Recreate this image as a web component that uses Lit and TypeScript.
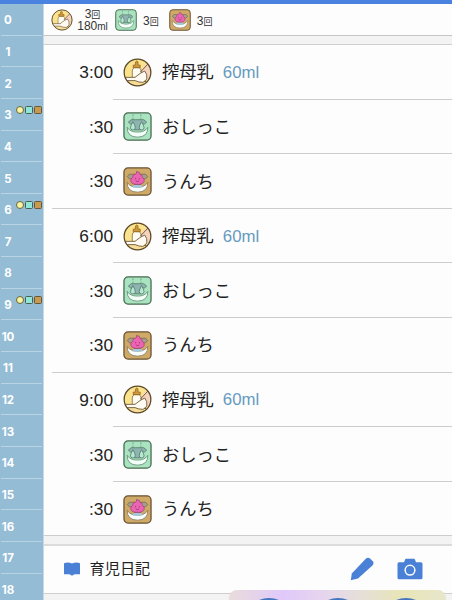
import { LitElement, html, svg, css } from "lit";
import { customElement, property } from "lit/decorators.js";

type Kind = "milk" | "pee" | "poo";

const milk = svg`
  <defs><clipPath id="c"><circle cx="15" cy="15" r="13.6"/></clipPath></defs>
  <circle cx="15" cy="15" r="13.6" fill="#fae38c"/>
  <g clip-path="url(#c)" stroke-linejoin="round">
    <path d="M26 4L18 13L24 20L27 28L31 28V5Z" fill="#f6d3bd"/>
    <path d="M1 24H12L20 27L15 30L3 28Z" fill="#f8dc9a"/>
    <path d="M9.6 20V13.5Q9.6 11 11.8 10H16.6Q18.8 11 18.8 13.5V17" fill="#fffdf3" stroke="#8a7448" stroke-width=".9"/>
    <path d="M10.6 10V7.4H12.7Q13 5.8 12.8 4.3Q14.2 1.8 15.6 4.3Q15.4 5.8 15.7 7.4H17.8V10Z" fill="#d2963a" stroke="#8a6125" stroke-width=".8"/>
    <path d="M1 20H12.5Q15.5 17.5 18.5 15.5L22.5 13.5Q25.5 17 24.6 21.5Q23.5 24.5 20.5 25.2Q16 25.2 12.5 23.4H1" fill="#fffaf2" stroke="#665238" stroke-width=".9"/>
    <path d="M18 14.5L27 5M22.5 23.5L26 27" fill="none" stroke="#654d2c" stroke-width=".9"/>
  </g>
  <circle cx="15" cy="15" r="13.8" fill="none" stroke="#5b4826" stroke-width="1.3"/>`;

const pee = svg`
  <rect x="1" y="1" width="28" height="28" rx="4.2" fill="#aae3bf" stroke="#44694f" stroke-width="1.3"/>
  <path d="M8.5 8H21.5L24.5 10.5L22 12.5L19.5 12L18.5 18.5H11.5L10.5 12L8 12.5L5.5 10.5Z" fill="#8fb3b0" stroke="#517266" stroke-width=".8" stroke-linejoin="round"/>
  <path d="M4.3 15.8Q4.3 26 15 26Q25.7 26 25.7 15.8Q23 20.8 15 20.8Q7 20.8 4.3 15.8Z" fill="#f2fff7" stroke="#5d8570" stroke-width=".8"/>
  <path d="M10.3 10Q5.2 18.3 10.3 18.6Q15.2 18.3 10.3 10ZM19.2 10Q14.4 18.3 19.2 18.6Q24.4 18.3 19.2 10Z" fill="#b7e8d2" stroke="#4d7863" stroke-width=".8"/>
  <path d="M10.3 2.5V4.5M10.3 5.8V8M18.5 2.5V4.5M18.5 5.8V8" stroke="#6a927c" stroke-width=".8"/>`;

const poo = svg`
  <rect x="1" y="1" width="28" height="28" rx="4.2" fill="#cfa968" stroke="#68502e" stroke-width="1.3"/>
  <path d="M6.5 7.5H23.5L25.5 10L23 12.5L20 12L18.5 18H11.5L10 12L7 12.5L4.5 10Z" fill="#a79d8f" stroke="#75654f" stroke-width=".8" stroke-linejoin="round"/>
  <path d="M4.3 15.8Q4.3 26 15 26Q25.7 26 25.7 15.8Q23 20.8 15 20.8Q7 20.8 4.3 15.8Z" fill="#f8fcfa" stroke="#84745b" stroke-width=".8"/>
  <path d="M11 18.5H19L20.5 21Q15 22.5 9.5 21Z" fill="#a9c6d6"/>
  <path d="M14 4.6Q17.8 5 17.6 7.6Q20.6 8.4 19.8 10.6Q22.6 11.8 21.9 15Q20.8 18 15 18Q9.2 18 8.1 15Q7.4 11.8 10.2 10.6Q9.4 8.4 12.4 7.6Q14.8 7 14 4.6Z" fill="#ec65b2" stroke="#9c3c75" stroke-width=".7"/>
  <path d="M13 11.3V12.7M17 11.3V12.7M13.2 14.3Q15 16 16.8 14.3" fill="none" stroke="#8f3168" stroke-width=".8"/>`;

const art = { milk, pee, poo };

@customElement("care-icon")
class CareIcon extends LitElement {
  @property() kind: Kind = "milk";
  static styles = css`
    :host { display: block; flex: none; }
    svg { display: block; width: 100%; height: 100%; }
  `;
  render() {
    return html`<svg viewBox="0 0 30 30">${art[this.kind]}</svg>`;
  }
}

@customElement("app-root")
class AppRoot extends LitElement {
  static styles = css`
    :host {
      display: flex; flex-direction: column; position: relative;
      height: 600px; width: 452px; overflow: hidden; background: #fdfdfd; color: #222;
      font-family: "Liberation Sans", "Noto Sans CJK JP", sans-serif;
    }
    * { box-sizing: border-box; }
    .bar { height: 4px; flex: none; background: #4a83df; }
    .body { display: flex; height: 596px; }
    .hours { width: 44px; flex: none; background: #94bcd5; border-right: 1px solid #c6d9e4; overflow: hidden; }
    .hour {
      height: 31.65px; margin: 0 1px; border-bottom: 1px solid #b9d5e5; display: flex; align-items: center;
      color: #fff; font: bold 11.5px Inter, sans-serif;
    }
    .num { width: 14px; display: flex; justify-content: center; white-space: nowrap; padding-top: 2px; }
    .marks { display: flex; gap: 1px; margin: -8px 0 0 1px; }
    .mark { width: 8px; height: 8px; border: 1px solid #49604f; border-radius: 1.5px; }
    .mark.milk { background: #faf3a0; border-radius: 50%; border-color: #66663f; }
    .mark.pee { background: #91e6da; }
    .mark.poo { background: #c69a50; border-color: #665738; }
    .main { flex: 1; min-width: 0; display: flex; flex-direction: column; }
    .summary { height: 32px; flex: none; display: flex; align-items: center; padding: 0 0 0 7px; border-bottom: 1px solid #c6c6c6; }
    .summary care-icon { width: 22px; height: 22px; }
    .count { display: flex; align-items: baseline; justify-content: center; font-size: 12px; line-height: 12px; color: #333; }
    .count small { font-size: 9px; line-height: 9px; }
    .count .ml { font-size: 10px; }
    .first { width: 31px; margin: 2px 7px 0 4px; }
    .mid { margin: 2px 10px 0 6px; }
    .last { margin: 2px 0 0 6px; }
    .gap { flex: none; height: 9px; background: #f3f3f3; border-bottom: 1px solid #cfcfcf; }
    .gap.low { height: 9.5px; border-bottom: 2px solid #dcdcdc; }
    .row { height: 54.62px; flex: none; display: flex; padding-left: 8px; }
    .time { width: 61px; text-align: right; font-size: 17.3px; display: flex; align-items: center; justify-content: flex-end; padding-top: 1px; }
    .entry { flex: 1; display: flex; align-items: center; padding: 1px 0 0 10px; border-bottom: 1px solid #cdcdcf; }
    .row.end .time { border-bottom: 1px solid #cdcdcf; }
    .row.final { padding-left: 0; }
    .row.final .time { width: 69px; }
    .entry care-icon { width: 29px; height: 29px; margin-right: 10px; }
    .label { font-size: 17.3px; line-height: 24px; white-space: nowrap; }
    .amount { font-size: 16.8px; color: #669abe; margin: 1px 0 0 9px; }
    .diary { height: 48px; flex: none; display: flex; align-items: center; padding: 0 29px 0 20px; border-bottom: 1px solid #cecece; }
    .diary .label { font-size: 15.2px; margin-left: 9.5px; flex: 1; }
    .diary svg { display: block; fill: #4a80d5; }
    .book { width: 16px; height: 14px; }
    .pencil { width: 24px; height: 24px; margin-right: 23px; }
    .camera { width: 26px; height: 22px; }
    .foot { flex: 1; background: #f3f3f3; }
    .sheet {
      position: absolute; left: 229px; top: 590px; width: 217px; height: 40px; border-radius: 8px;
      background: linear-gradient(90deg, #e9dcdc, #e0c9fa 25%, #e6d4ef 42%, #e5dfda 60%, #e8e5b6 80%, #e7e6cc);
      display: flex; justify-content: space-between; padding: 8px 14px;
    }
    .dot { width: 52px; height: 52px; flex: none; border-radius: 50%; background: #4576bf; }
  `;

  row(i: number) {
    const kind = (["milk", "pee", "poo"] as Kind[])[i % 3];
    const label = { milk: "搾母乳", pee: "おしっこ", poo: "うんち" }[kind];
    const time = kind === "milk" ? `${i + 3}:00` : ":30";
    return html`<div class="row ${i % 3 === 2 ? "end" : ""} ${i === 8 ? "final" : ""}">
      <div class="time">${time}</div>
      <div class="entry"><care-icon .kind=${kind}></care-icon><span class="label">${label}</span>${
        kind === "milk" ? html`<span class="amount">60ml</span>` : ""}</div>
    </div>`;
  }

  render() {
    return html`
      <div class="bar"></div>
      <div class="body">
        <div class="hours">${Array.from({ length: 19 }, (_, h) => html`
          <div class="hour"><span class="num">${h}</span>${[3, 6, 9].includes(h)
            ? html`<span class="marks"><i class="mark milk"></i><i class="mark pee"></i><i class="mark poo"></i></span>` : ""}</div>`)}
        </div>
        <div class="main">
          <div class="summary">
            <care-icon .kind=${"milk"}></care-icon>
            <div class="first">
              <div class="count">3<small>回</small></div>
              <div class="count">180<span class="ml">ml</span></div>
            </div>
            <care-icon .kind=${"pee"}></care-icon><div class="count mid">3<small>回</small></div>
            <care-icon .kind=${"poo"}></care-icon><div class="count last">3<small>回</small></div>
          </div>
          <div class="gap"></div>
          ${Array.from({ length: 9 }, (_, i) => this.row(i))}
          <div class="gap low"></div>
          <div class="diary">
            <svg class="book" viewBox="0 0 16 14"><path d="M0 1.2Q4-.3 8 1.5Q12-.3 16 1.2V12.3H10.5L8 13.7L5.5 12.3H0Z"/></svg>
            <span class="label">育児日記</span>
            <svg class="pencil" viewBox="0 0 24 24"><path d="M.8 23.2L1.8 16.5L15.5 2Q17.8-.2 20 1.4L22.8 4.2Q24.4 6.2 22.4 8.4L8 21.6Z"/></svg>
            <svg class="camera" viewBox="0 0 26 22"><path fill-rule="evenodd" d="M2 4.2H7L8.2 1.3Q8.5.7 9.1.7H16.9Q17.5.7 17.8 1.3L19 4.2H24Q25.5 4.2 25.5 5.7V19.7Q25.5 21.2 24 21.2H2Q.5 21.2 .5 19.7V5.7Q.5 4.2 2 4.2ZM13 6.6A5.6 5.6 0 1 0 13 17.8A5.6 5.6 0 1 0 13 6.6ZM13 8.1A4.1 4.1 0 1 1 13 16.3A4.1 4.1 0 1 1 13 8.1Z"/></svg>
          </div>
          <div class="foot"></div>
        </div>
      </div>
      <div class="sheet"><i class="dot"></i><i class="dot"></i><i class="dot"></i></div>`;
  }
}
